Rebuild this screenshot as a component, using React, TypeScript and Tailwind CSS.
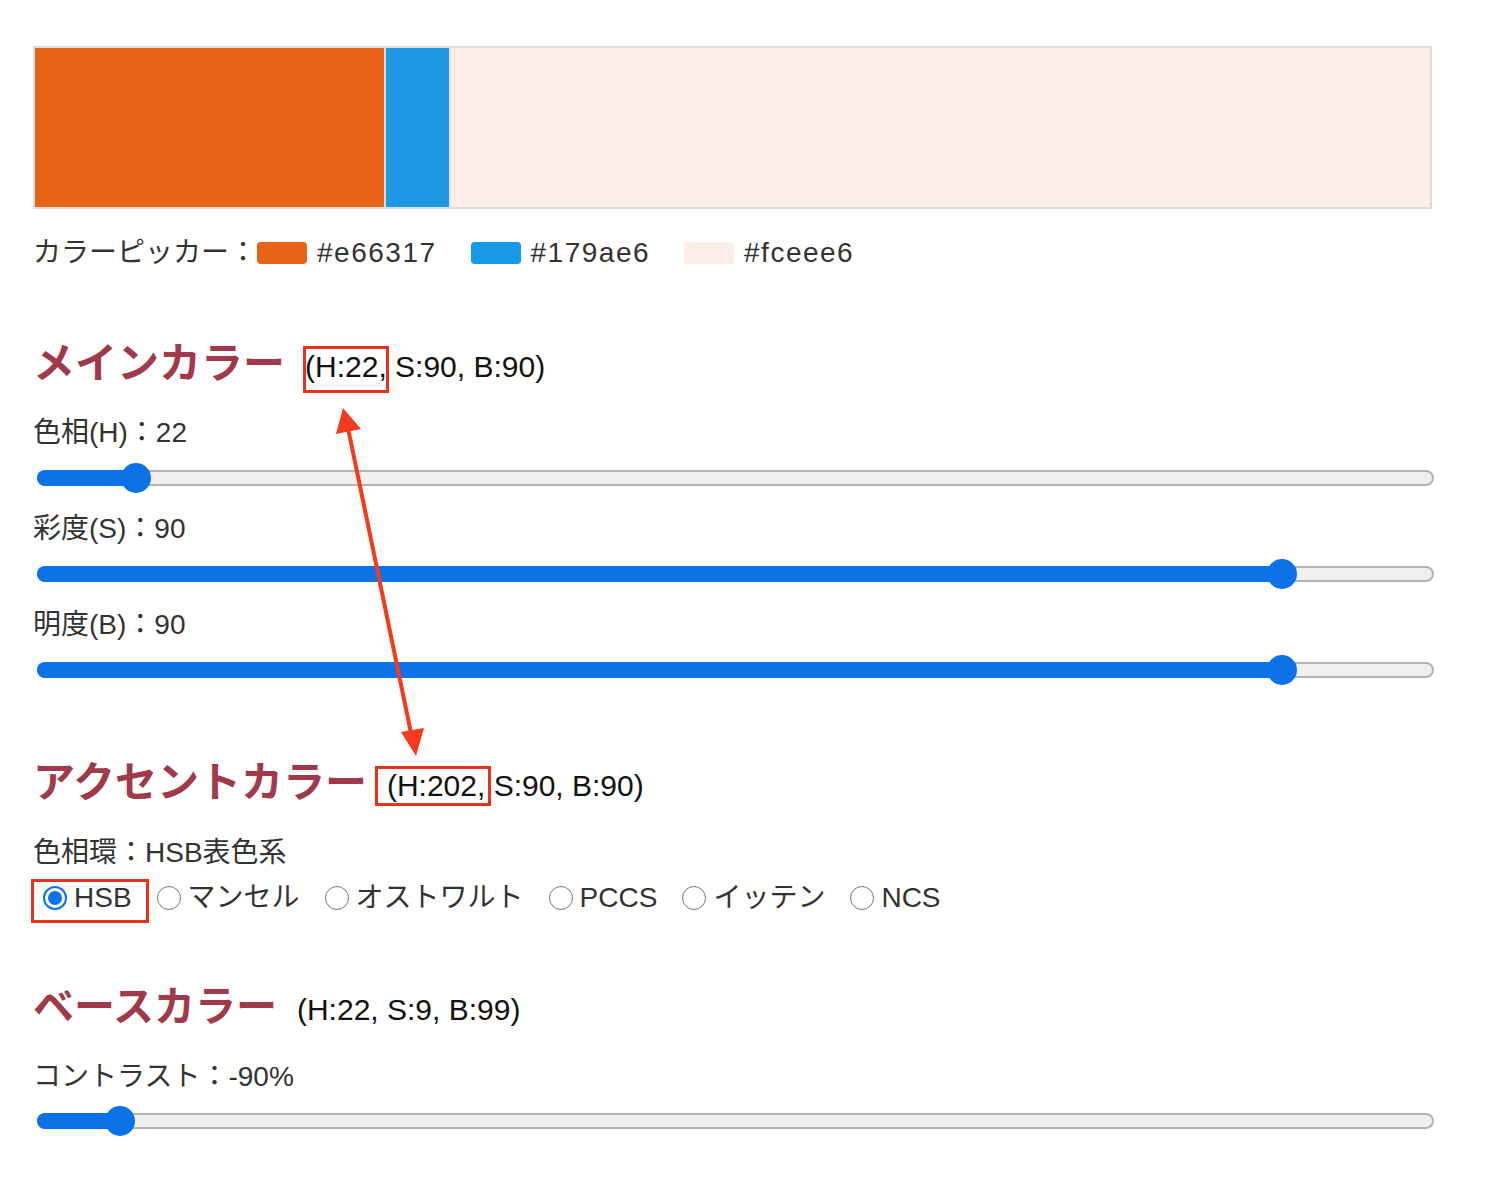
import type { ReactNode } from "react";

const FONT = "font-['Liberation_Sans','Noto_Sans_CJK_JP',sans-serif]";

const TRACK_W = 1397;
const THUMB = 30;

function Slider({ fraction }: { fraction: number }) {
  const center = THUMB / 2 + (TRACK_W - THUMB) * fraction;
  return (
    <div className="relative ml-[4px] h-[30px] w-[1397px] flex items-center">
      <div className="h-[16px] w-full rounded-full border-2 border-[#b3b3b3] bg-[#efefef]" />
      <div
        className="absolute left-0 top-[7px] h-[16px] rounded-l-full bg-[#0b72e8]"
        style={{ width: center }}
      />
      <div
        className="absolute top-0 h-[30px] w-[30px] rounded-full bg-[#0b72e8]"
        style={{ left: center - THUMB / 2 }}
      />
    </div>
  );
}

function Label({ children, className = "" }: { children: ReactNode; className?: string }) {
  return (
    <div className={`h-[40px] flex items-center text-[28px] text-[#333] ${className}`}>
      {children}
    </div>
  );
}

function Heading({
  title,
  children,
  className = "",
  size = "text-[42px]",
}: {
  title: string;
  children: ReactNode;
  className?: string;
  size?: string;
}) {
  return (
    <div className={`h-[50px] flex items-center gap-[20px] ${className}`}>
      <h2 className={`${size} font-bold leading-[50px] text-[#a03a4a]`}>{title}</h2>
      <span className="text-[30px] leading-[40px] text-[#111] mt-[6px]">{children}</span>
    </div>
  );
}

function Mark({ children, className }: { children: ReactNode; className: string }) {
  return (
    <span className="relative">
      {children}
      <span className={`absolute border-[3px] border-[#e8321e] ${className}`} />
    </span>
  );
}

function Radio({ label, checked = false }: { label: string; checked?: boolean }) {
  return (
    <span className="flex items-center gap-[7px]">
      {checked ? (
        <span className="w-[24px] h-[24px] rounded-full border-2 border-[#0b72e8] flex items-center justify-center">
          <span className="w-[14px] h-[14px] rounded-full bg-[#0b72e8]" />
        </span>
      ) : (
        <span className="w-[24px] h-[24px] rounded-full border-[1.5px] border-[#767676] bg-white" />
      )}
      <span>{label}</span>
    </span>
  );
}

const swatches = [
  { hex: "#e66317", bg: "bg-[#e66317]" },
  { hex: "#179ae6", bg: "bg-[#179ae6]" },
  { hex: "#fceee6", bg: "bg-[#fceee6]" },
];

export default function App() {
  return (
    <div className={`relative w-[1490px] h-[1184px] bg-white ${FONT}`}>
      <div className="pl-[33px] pt-[46px] flex flex-col">
        {/* Preview bar */}
        <div className="w-[1399px] h-[163px] flex border-2 border-[#dcdcdc]">
          <div className="w-[351px] bg-[#e66317] border-r-2 border-[#e9ddd6]" />
          <div className="w-[65px] bg-[#1c99e2] border-r-2 border-[#dbe6ee]" />
          <div className="flex-1 bg-[#fcede6]" />
        </div>

        {/* Picker legend */}
        <Label className="mt-[24px]">
          <span>カラーピッカー：</span>
          <span className="flex items-center gap-[34px]">
            {swatches.map((s) => (
              <span key={s.hex} className="flex items-center gap-[10px]">
                <span className={`w-[50px] h-[22px] rounded-[4px] ${s.bg}`} />
                <span className="tracking-[1.5px]">{s.hex}</span>
              </span>
            ))}
          </span>
        </Label>

        {/* Main color */}
        <Heading title="メインカラー" className="mt-[66px]">
          <Mark className="-left-[2px] -right-[2px] -top-[4px] -bottom-[10px]">(H:22,</Mark> S:90, B:90)
        </Heading>
        <Label className="mt-[24px]">色相(H)：22</Label>
        <div className="mt-[10px]">
          <Slider fraction={22 / 360} />
        </div>
        <Label className="mt-[16px]">彩度(S)：90</Label>
        <div className="mt-[10px]">
          <Slider fraction={0.9} />
        </div>
        <Label className="mt-[16px]">明度(B)：90</Label>
        <div className="mt-[10px]">
          <Slider fraction={0.9} />
        </div>

        {/* Accent color */}
        <Heading title="アクセントカラー" className="mt-[73px]">
          <Mark className="-left-[12px] -right-[6px] -top-[3px] -bottom-[4px]">(H:202,</Mark> S:90, B:90)
        </Heading>
        <Label className="mt-[25px]">色相環：HSB表色系</Label>
        <Label className="mt-[5px] gap-[25px] pl-[10px]">
          <span className="relative">
            <Radio label="HSB" checked />
            <span className="absolute -left-[12px] -right-[17px] top-[2px] -bottom-[4px] border-[3px] border-[#e8321e]" />
          </span>
          <Radio label="マンセル" />
          <Radio label="オストワルト" />
          <Radio label="PCCS" />
          <Radio label="イッテン" />
          <Radio label="NCS" />
        </Label>

        {/* Base color */}
        <Heading title="ベースカラー" size="text-[41px]" className="mt-[64px]">
          (H:22, S:9, B:99)
        </Heading>
        <Label className="mt-[25px]">コントラスト：-90%</Label>
        <div className="mt-[9px]">
          <Slider fraction={0.05} />
        </div>
      </div>

      {/* Annotation arrow */}
      <svg className="absolute left-0 top-0 pointer-events-none" width="1490" height="1184">
        <line x1="348" y1="428" x2="411" y2="733" stroke="#f23b1f" strokeWidth="4" />
        <polygon points="343,408 336,434 361,429" fill="#f23b1f" />
        <polygon points="416,756 401,732 424,728" fill="#f23b1f" />
      </svg>
    </div>
  );
}
